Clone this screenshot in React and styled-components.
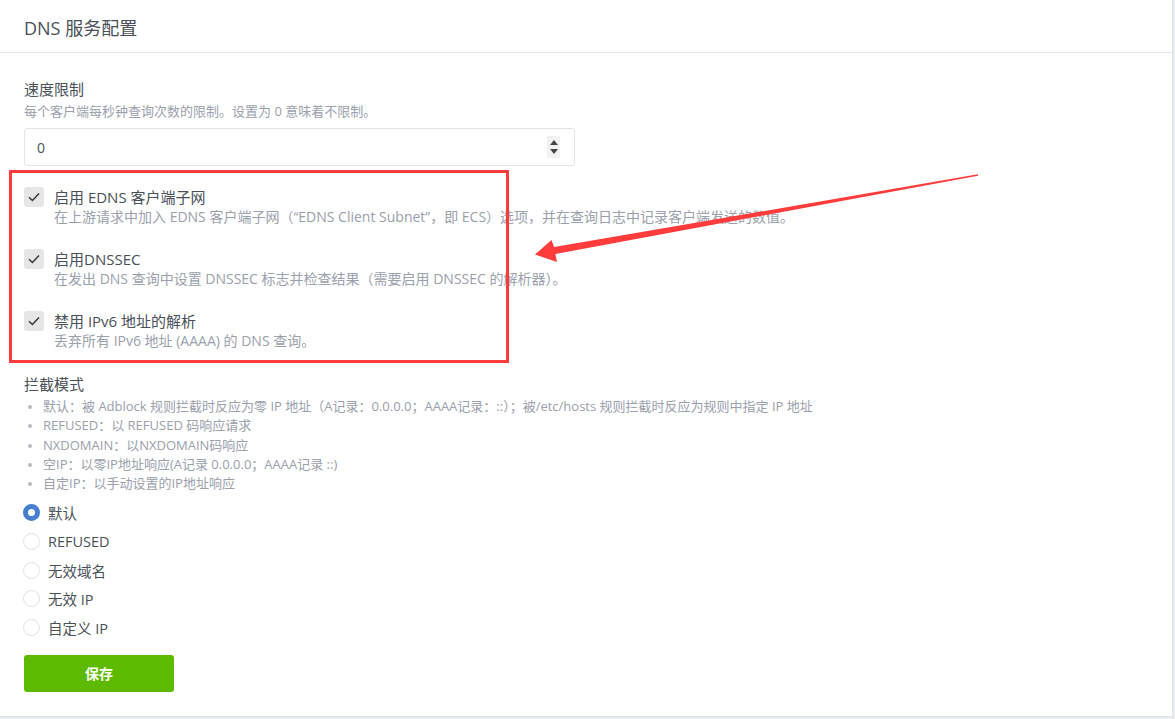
import React from "react";
import styled, { createGlobalStyle } from "styled-components";

const GlobalStyle = createGlobalStyle`
  html, body {
    margin: 0;
    padding: 0;
    background: #e9ecef;
  }
  body {
    font-family: "Open Sans", "Noto Sans CJK SC", sans-serif;
    color: #495057;
  }
`;

const Page = styled.div`
  position: relative;
  width: 1175px;
  height: 719px;
  overflow: hidden;
`;

const Card = styled.div`
  width: 1172px;
  height: 716px;
  background: #fff;
  border-right: 1px solid #dfe3ea;
  border-bottom: 1px solid #dfe3ea;
  display: flex;
  flex-direction: column;
`;

const CardHeader = styled.div`
  height: 52px;
  border-bottom: 1px solid #e3e6ec;
  display: flex;
  align-items: center;
  padding: 0 24px;
`;

const Title = styled.h3`
  margin: 0;
  font-size: 18px;
  font-weight: 400;
  color: #495057;
  padding-top: 1px;
`;

const CardBody = styled.div`
  padding: 25px 24px 0;
  display: flex;
  flex-direction: column;
  align-items: flex-start;
`;

const Label = styled.div`
  font-size: 15px;
  line-height: 22px;
  color: #495057;
  margin-top: ${(p) => p.$mt || 0}px;
`;

const Hint = styled.div`
  font-size: 13px;
  line-height: 18px;
  color: #9aa0ac;
  margin-top: 2px;
`;

const InputBox = styled.div`
  margin-top: 8px;
  height: 36px;
  border: 1px solid #e0e5ec;
  border-radius: 3px;
  display: flex;
  align-items: center;
  justify-content: space-between;
  padding: 0 14px 0 12px;
  box-sizing: content-box;
  width: 523px;
`;

const Value = styled.span`
  font-size: 14px;
  color: #495057;
`;

const Spinner = styled.div`
  width: 13px;
  height: 22px;
  background: #f1f1f1;
  display: flex;
  flex-direction: column;
  align-items: center;
  justify-content: space-around;
  padding: 2px 0;
  box-sizing: border-box;
`;

const Tri = styled.span`
  width: 0;
  height: 0;
  border-left: 4px solid transparent;
  border-right: 4px solid transparent;
  ${(p) =>
    p.$down ? "border-top: 5px solid #444;" : "border-bottom: 5px solid #444;"}
`;

const CheckList = styled.div`
  margin-top: 21px;
  display: flex;
  flex-direction: column;
  gap: 22px;
`;

const CheckItem = styled.div`
  display: flex;
  align-items: flex-start;
  gap: 10px;
`;

const Box = styled.span`
  width: 20px;
  height: 20px;
  border-radius: 3px;
  background: #e6e6e6;
  display: flex;
  align-items: center;
  justify-content: center;
  flex-shrink: 0;
`;

const CheckText = styled.div`
  display: flex;
  flex-direction: column;
`;

const CheckLabel = styled.div`
  font-size: 15px;
  line-height: 20px;
  color: #495057;
`;

const CheckDesc = styled.div`
  font-size: 14px;
  line-height: 20px;
  color: #9aa0ac;
`;

const Bullets = styled.ul`
  margin: 2px 0 0;
  padding-left: 19px;
  list-style: disc;
  font-size: 13px;
  line-height: 19.3px;
  color: #9aa0ac;
  li::marker {
    color: #b5b9c0;
    font-size: 11px;
  }
`;

const Radios = styled.div`
  margin-top: 5px;
  display: flex;
  flex-direction: column;
`;

const RadioRow = styled.label`
  height: 28.7px;
  display: flex;
  align-items: center;
  gap: 8px;
  font-size: 14.5px;
  color: #495057;
`;

const RadioDot = styled.span`
  width: 17px;
  height: 17px;
  border-radius: 50%;
  box-sizing: border-box;
  margin-left: -1px;
  flex-shrink: 0;
  background: #fff;
  border: ${(p) => (p.$on ? "5.5px solid #467fcf" : "1px solid #dde1e8")};
`;

const SaveButton = styled.button`
  margin-top: 13px;
  width: 150px;
  height: 37px;
  border: none;
  border-radius: 3px;
  background: #5eba00;
  color: #fff;
  font-family: "Open Sans", "Noto Sans CJK SC", sans-serif;
  font-size: 14px;
  font-weight: 700;
`;

const Overlay = styled.svg`
  position: absolute;
  left: 0;
  top: 0;
  pointer-events: none;
`;

const Check = () => (
  <svg width="12" height="10" viewBox="0 0 12 10">
    <path d="M1 5.2 L4.4 8.4 L11 1.6" fill="none" stroke="#333" strokeWidth="1.4" />
  </svg>
);

const options = [
  {
    label: "启用 EDNS 客户端子网",
    desc: "在上游请求中加入 EDNS 客户端子网（“EDNS Client Subnet”，即 ECS）选项，并在查询日志中记录客户端发送的数值。",
  },
  {
    label: "启用DNSSEC",
    desc: "在发出 DNS 查询中设置 DNSSEC 标志并检查结果（需要启用 DNSSEC 的解析器）。",
  },
  {
    label: "禁用 IPv6 地址的解析",
    desc: "丢弃所有 IPv6 地址 (AAAA) 的 DNS 查询。",
  },
];

const modes = [
  "默认：被 Adblock 规则拦截时反应为零 IP 地址（A记录：0.0.0.0；AAAA记录：::）；被/etc/hosts 规则拦截时反应为规则中指定 IP 地址",
  "REFUSED：以 REFUSED 码响应请求",
  "NXDOMAIN：以NXDOMAIN码响应",
  "空IP：以零IP地址响应(A记录 0.0.0.0；AAAA记录 ::)",
  "自定IP：以手动设置的IP地址响应",
];

const radios = ["默认", "REFUSED", "无效域名", "无效 IP", "自定义 IP"];

export default function App() {
  return (
    <>
      <GlobalStyle />
      <Page>
        <Card>
          <CardHeader>
            <Title>DNS 服务配置</Title>
          </CardHeader>
          <CardBody>
            <Label>速度限制</Label>
            <Hint>每个客户端每秒钟查询次数的限制。设置为 0 意味着不限制。</Hint>
            <InputBox>
              <Value>0</Value>
              <Spinner>
                <Tri />
                <Tri $down />
              </Spinner>
            </InputBox>

            <CheckList>
              {options.map((o) => (
                <CheckItem key={o.label}>
                  <Box>
                    <Check />
                  </Box>
                  <CheckText>
                    <CheckLabel>{o.label}</CheckLabel>
                    <CheckDesc>{o.desc}</CheckDesc>
                  </CheckText>
                </CheckItem>
              ))}
            </CheckList>

            <Label $mt={22}>拦截模式</Label>
            <Bullets>
              {modes.map((m) => (
                <li key={m}>{m}</li>
              ))}
            </Bullets>

            <Radios>
              {radios.map((r, i) => (
                <RadioRow key={r}>
                  <RadioDot $on={i === 0} />
                  {r}
                </RadioRow>
              ))}
            </Radios>

            <SaveButton>保存</SaveButton>
          </CardBody>
        </Card>

        <Overlay width="1175" height="719" viewBox="0 0 1175 719">
          <rect x="10.5" y="171.5" width="497" height="190" fill="none" stroke="#ff3b3b" strokeWidth="3" />
          <polygon
            points="978,174.3 554.1,247.1 551.5,240 535,254.5 557,262 555.3,253.9 978,175.7"
            fill="#ff3b3b"
          />
        </Overlay>
      </Page>
    </>
  );
}
